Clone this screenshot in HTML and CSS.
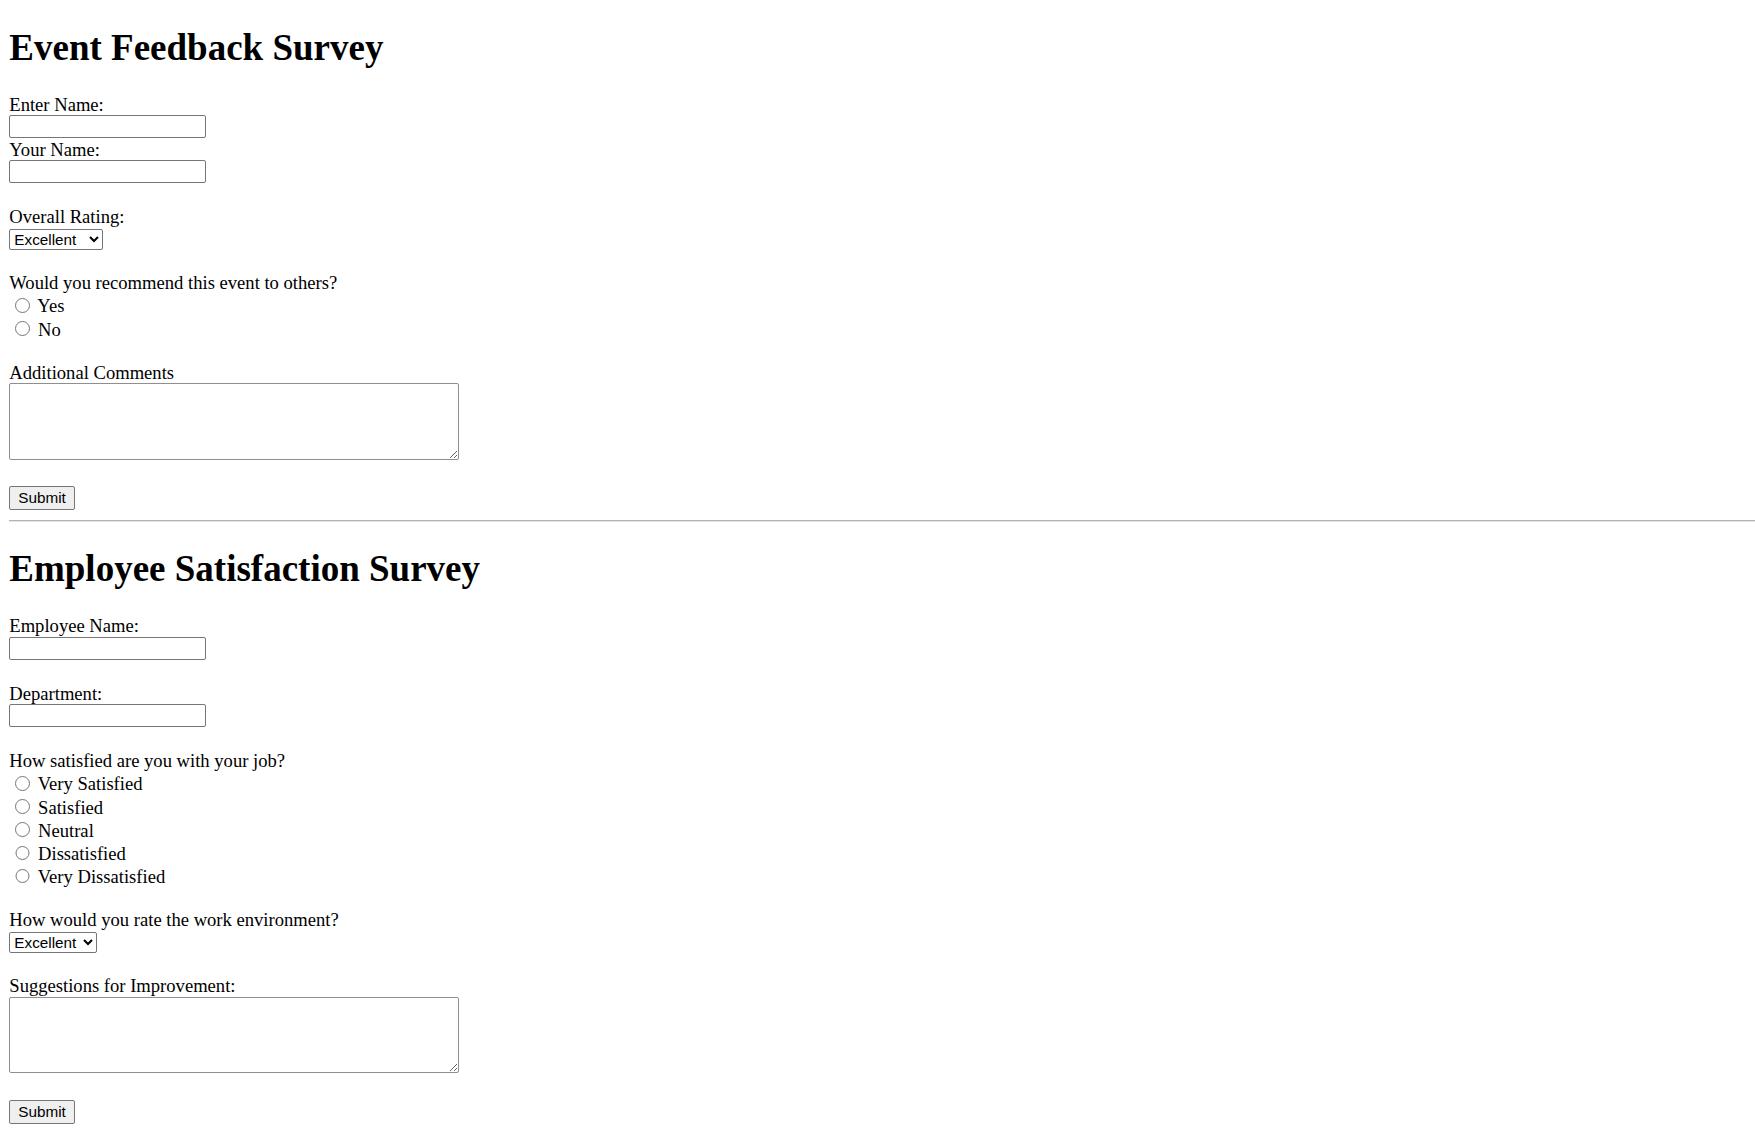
FILE: index.html
```html
<!DOCTYPE html>
<html lang="en">
<head>
<meta charset="utf-8">
<title>Surveys</title>
<link rel="stylesheet" href="styles.css">
</head>
<body class="page">
<main class="wrap">
  <h1 class="title">Event Feedback Survey</h1>
  <form class="survey">
    <div class="q q-tight">
      <label class="lbl">Enter Name:</label>
      <input class="txt" type="text">
    </div>
    <div class="q">
      <label class="lbl">Your Name:</label>
      <input class="txt" type="text">
    </div>
    <div class="q q-select">
      <label class="lbl">Overall Rating:</label>
      <select class="sel sel-a"><option>Excellent</option><option>Good</option><option>Average</option><option>Poor</option></select>
    </div>
    <div class="q q-radio">
      <label class="lbl">Would you recommend this event to others?</label>
      <div class="opt"><input class="rad" type="radio" name="rec"> Yes</div>
      <div class="opt"><input class="rad" type="radio" name="rec"> No</div>
    </div>
    <div class="q q-last">
      <label class="lbl">Additional Comments</label>
      <textarea class="area"></textarea>
    </div>
    <input class="btn" type="submit" value="Submit">
  </form>
  <hr class="rule">
  <h1 class="title">Employee Satisfaction Survey</h1>
  <form class="survey">
    <div class="q">
      <label class="lbl">Employee Name:</label>
      <input class="txt" type="text">
    </div>
    <div class="q">
      <label class="lbl">Department:</label>
      <input class="txt" type="text">
    </div>
    <div class="q q-radio">
      <label class="lbl">How satisfied are you with your job?</label>
      <div class="opt"><input class="rad" type="radio" name="sat"> Very Satisfied</div>
      <div class="opt"><input class="rad" type="radio" name="sat"> Satisfied</div>
      <div class="opt"><input class="rad" type="radio" name="sat"> Neutral</div>
      <div class="opt"><input class="rad" type="radio" name="sat"> Dissatisfied</div>
      <div class="opt"><input class="rad" type="radio" name="sat"> Very Dissatisfied</div>
    </div>
    <div class="q q-select">
      <label class="lbl">How would you rate the work environment?</label>
      <select class="sel sel-b"><option>Excellent</option><option>Good</option><option>Fair</option><option>Poor</option></select>
    </div>
    <div class="q q-last">
      <label class="lbl">Suggestions for Improvement:</label>
      <textarea class="area"></textarea>
    </div>
    <input class="btn" type="submit" value="Submit">
  </form>
</main>
</body>
</html>
```
FILE: styles.css
```css
html {
  background: #fff;
}
.page {
  margin: 0;
  font-family: "Liberation Serif", "Times New Roman", serif;
  font-size: 18.6px;
  color: #000;
}
.wrap {
  display: block;
  padding: 0 0 10px 9.3px;
}
.title {
  font-size: 37px;
  font-weight: bold;
  line-height: 42px;
  margin: 0 0 25.4px;
  padding-top: 26.6px;
}
.rule + .title {
  padding-top: 0;
  margin-top: 25.8px;
}
.survey {
  margin: 0;
}
.q {
  margin-bottom: 23px;
}
.q-tight {
  margin-bottom: 0.5px;
}
.q-select {
  margin-bottom: 22.5px;
}
.q-radio {
  margin-bottom: 22px;
}
.q-last {
  margin-bottom: 26.3px;
}
.lbl {
  display: block;
  line-height: 21px;
}
.txt {
  display: block;
  box-sizing: border-box;
  width: 196.5px;
  height: 23px;
  margin: 0.5px 0 0;
  padding: 1px 2px;
  border: 1px solid #767676;
  border-radius: 2px;
  font-family: "Liberation Sans", Arial, sans-serif;
  font-size: 15.3px;
  background: #fff;
}
.sel {
  display: block;
  box-sizing: border-box;
  height: 21px;
  margin: 1.5px 0 0;
  border: 1px solid #767676;
  border-radius: 2px;
  font-family: "Liberation Sans", Arial, sans-serif;
  font-size: 15.3px;
  color: #000;
  background: #fff;
}
.sel-a {
  width: 93.5px;
}
.sel-b {
  width: 87.5px;
}
.opt {
  line-height: 21px;
}
.rad {
  width: 14.5px;
  height: 14.5px;
  margin: 4.7px 3.6px 0 6px;
  vertical-align: baseline;
}
.area {
  display: block;
  box-sizing: border-box;
  width: 449.5px;
  height: 76.5px;
  margin: 0.5px 0 0;
  border: 1px solid #8f8f8f;
  border-radius: 2px;
  font-family: "Liberation Mono", monospace;
  font-size: 15.3px;
}
.btn {
  display: block;
  box-sizing: border-box;
  width: 65.5px;
  height: 24px;
  margin: 0;
  padding: 1px 7px;
  border: 1px solid #767676;
  border-radius: 2px;
  background: #efefef;
  font-family: "Liberation Sans", Arial, sans-serif;
  font-size: 15.3px;
  color: #000;
}
.rule {
  margin: 10px 0 0;
  border: 0;
  border-top: 1px solid #b4b4b4;
  border-bottom: 1px solid #e4e4e4;
  height: 0;
}
```
